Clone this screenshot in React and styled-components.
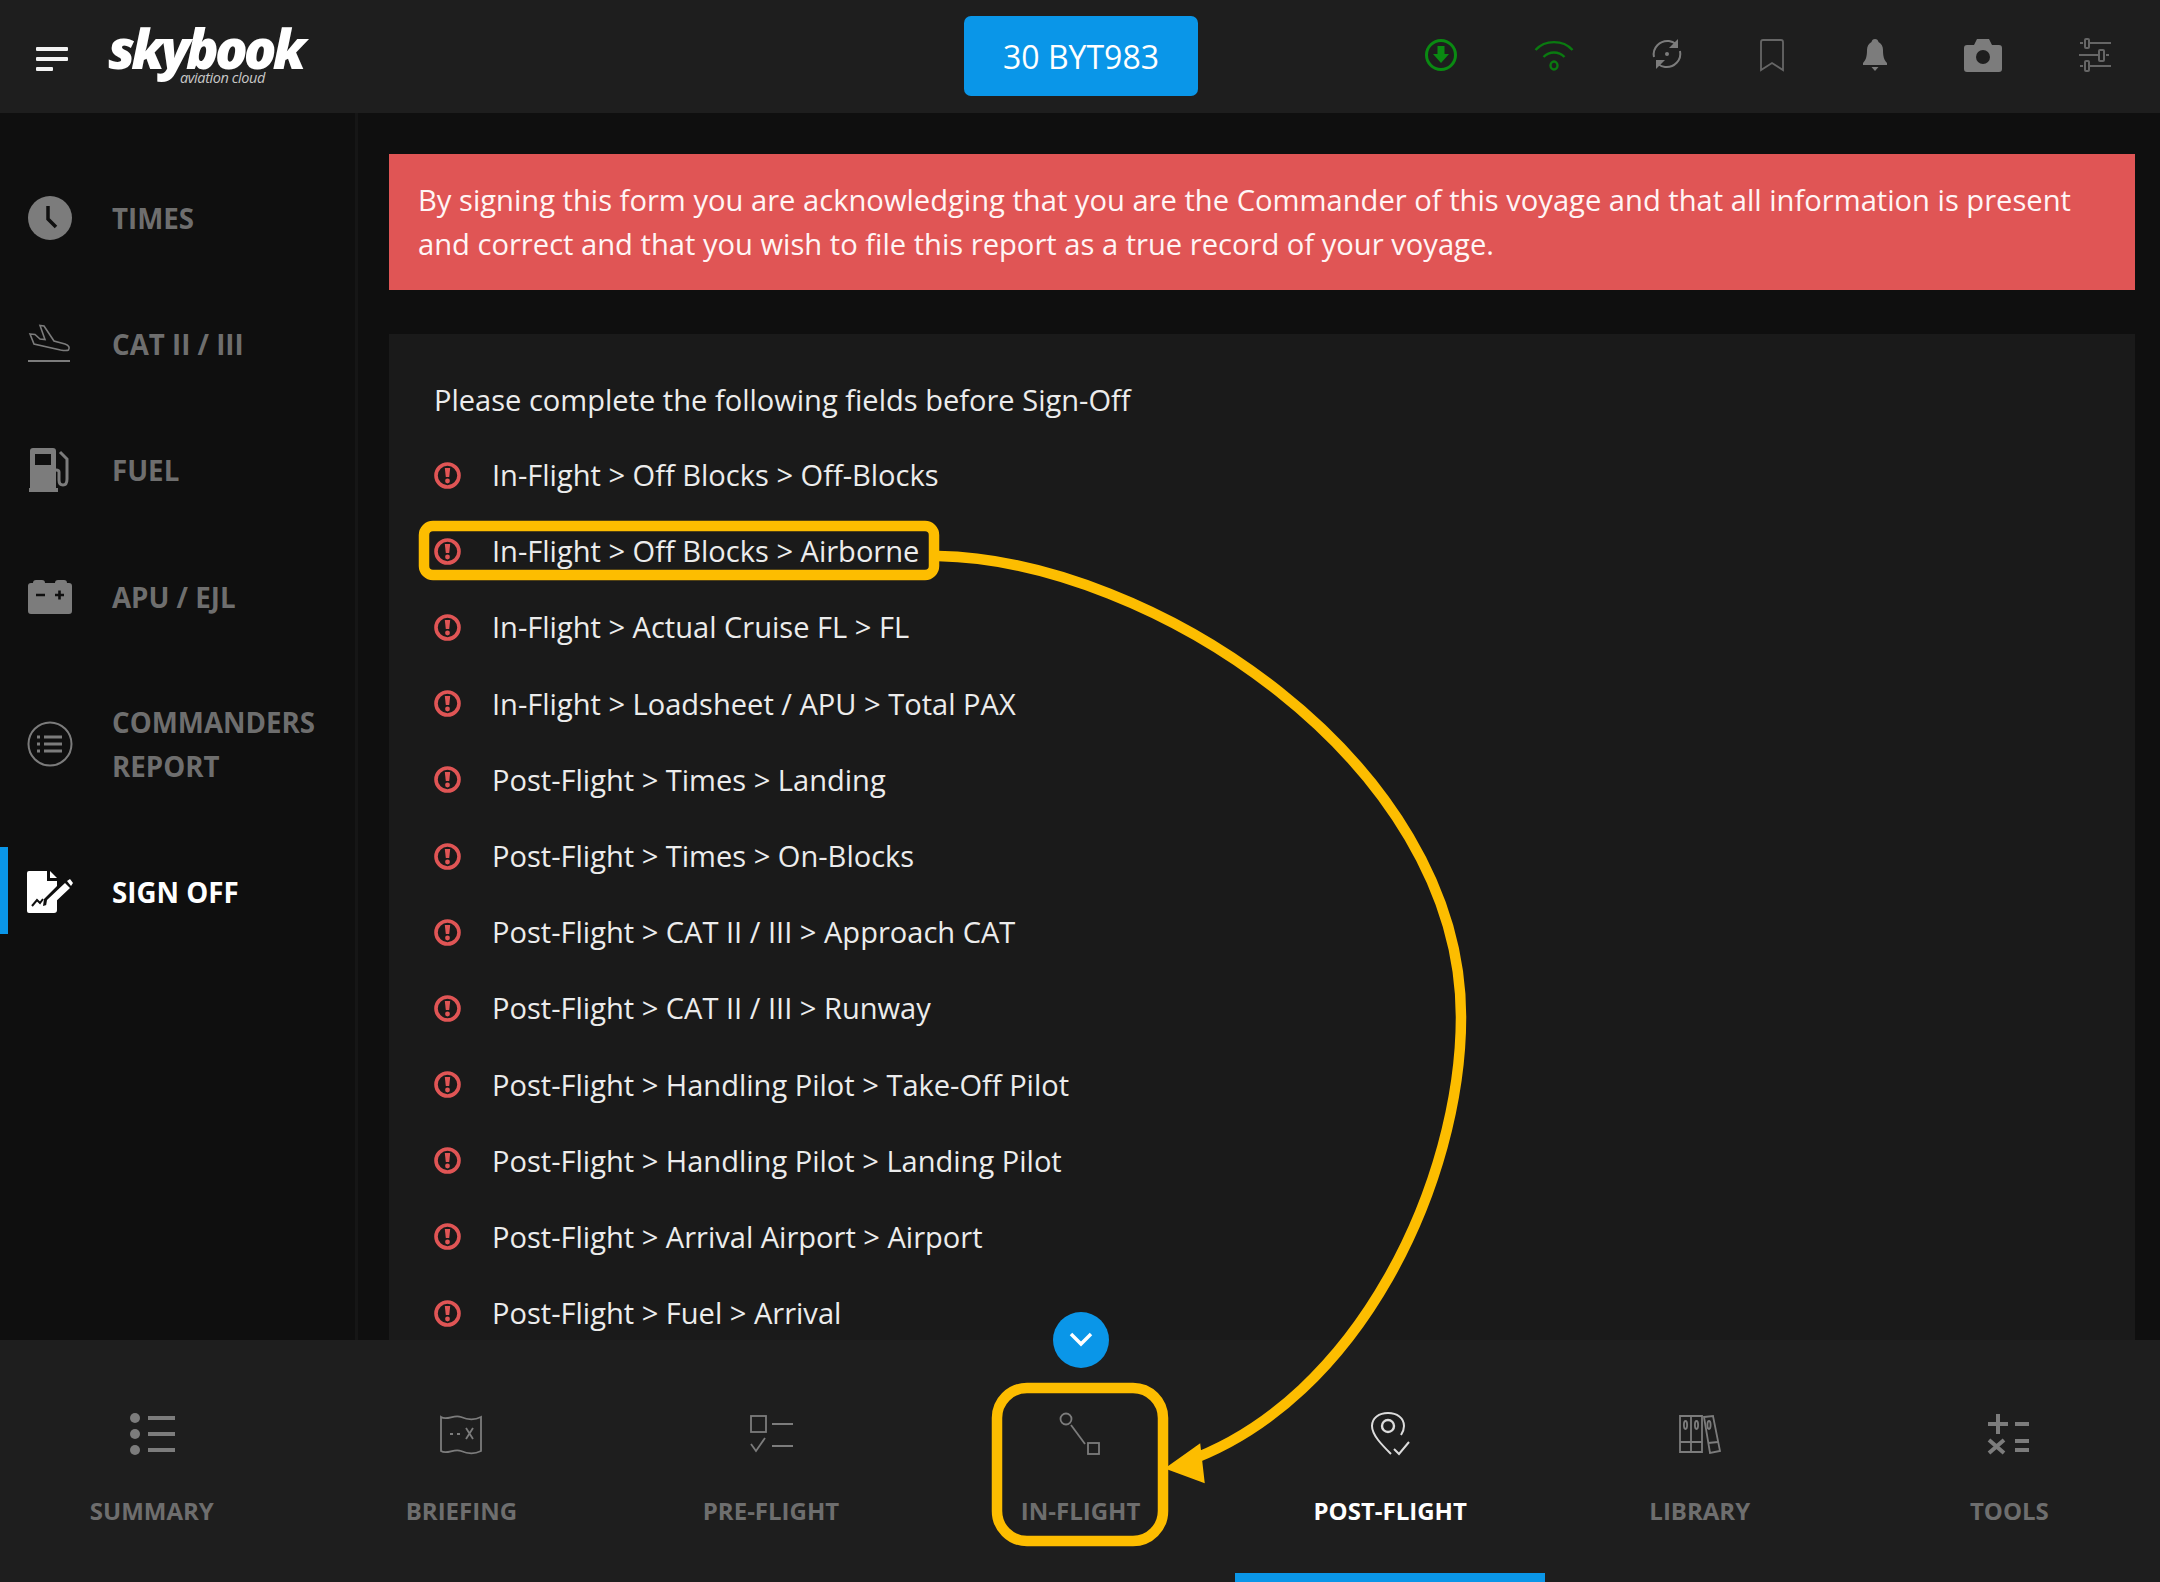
import React from "react";
import styled, { createGlobalStyle } from "styled-components";

const GlobalStyle = createGlobalStyle`
  html, body {
    margin: 0;
    padding: 0;
    background: #0f0f0f;
  }
  * {
    box-sizing: border-box;
  }
`;

const sideItems = [
  { label: ["TIMES"], icon: "clock" },
  { label: ["CAT II / III"], icon: "landing" },
  { label: ["FUEL"], icon: "fuel" },
  { label: ["APU / EJL"], icon: "battery" },
  { label: ["COMMANDERS", "REPORT"], icon: "report" },
  { label: ["SIGN OFF"], icon: "sign", active: true },
];

const fields = [
  "In-Flight > Off Blocks > Off-Blocks",
  "In-Flight > Off Blocks > Airborne",
  "In-Flight > Actual Cruise FL > FL",
  "In-Flight > Loadsheet / APU > Total PAX",
  "Post-Flight > Times > Landing",
  "Post-Flight > Times > On-Blocks",
  "Post-Flight > CAT II / III > Approach CAT",
  "Post-Flight > CAT II / III > Runway",
  "Post-Flight > Handling Pilot > Take-Off Pilot",
  "Post-Flight > Handling Pilot > Landing Pilot",
  "Post-Flight > Arrival Airport > Airport",
  "Post-Flight > Fuel > Arrival",
];

const tabs = [
  { label: "SUMMARY", icon: "summary" },
  { label: "BRIEFING", icon: "briefing" },
  { label: "PRE-FLIGHT", icon: "preflight" },
  { label: "IN-FLIGHT", icon: "inflight" },
  { label: "POST-FLIGHT", icon: "postflight", active: true },
  { label: "LIBRARY", icon: "library" },
  { label: "TOOLS", icon: "tools" },
];

const GREY = "#7c7c7c";

const icons = {
  download: (
    <svg width="34" height="34" viewBox="0 0 34 34">
      <circle cx="17" cy="17" r="14.5" fill="none" stroke="#0a8a12" strokeWidth="3" />
      <path d="M13.5 8h7v8h4.5L17 25 9 16h4.5z" fill="#0a8a12" />
    </svg>
  ),
  wifi: (
    <svg width="40" height="34" viewBox="0 0 40 34" fill="none" stroke="#0a7a10" strokeWidth="2.4">
      <path d="M1.500 12C11 1.500 29 1.500 38.500 12" />
      <path d="M9.500 19c6-6 15-6 21 0" />
      <ellipse cx="20" cy="27.500" rx="3.500" ry="4" />
    </svg>
  ),
  sync: (
    <svg width="32" height="32" viewBox="0 0 32 32" fill="none" stroke={GREY} strokeWidth="2">
      <path d="M3 19C1 10 9 2 18 3c3 .4 5 1.500 7 3" />
      <path d="M29 13c2 9-6 17-15 16-3-.4-5-1.500-7-3" />
      <path d="M27 1v9h-9z" fill={GREY} stroke="none" />
      <path d="M5 31v-9h9z" fill={GREY} stroke="none" />
      <circle cx="16" cy="16" r="2" fill={GREY} stroke="none" />
    </svg>
  ),
  bookmark: (
    <svg width="26" height="34" viewBox="0 0 26 34" fill="none" stroke="#666" strokeWidth="1.800">
      <path d="M2 32V4q0-2 2-2h18q2 0 2 2v28l-11-7z" />
    </svg>
  ),
  bell: (
    <svg width="26" height="34" viewBox="0 0 26 34" fill={GREY}>
      <path d="M13 1c2 0 3 1 3.500 3 3 1.500 4.500 4.500 4.500 8 0 6 1 10 4 13v2H1v-2c3-3 4-7 4-13 0-3.500 1.500-6.500 4.500-8C10 2 11 1 13 1z" />
      <path d="M9.500 29h7L13 33z" />
    </svg>
  ),
  camera: (
    <svg width="38" height="34" viewBox="0 0 38 34">
      <path d="M3 7h7l3-6h12l3 6h7q3 0 3 3v21q0 3-3 3H3q-3 0-3-3V10q0-3 3-3z" fill={GREY} />
      <circle cx="19" cy="19" r="7" fill="#1e1e1e" />
    </svg>
  ),
  sliders: (
    <svg width="34" height="34" viewBox="0 0 34 34" fill="none" stroke="#666" strokeWidth="2">
      <path d="M12 5h21M2 5h3M1 17h19M28 17h3M12 28h21M2 28h3" />
      <rect x="7" y="1" width="4" height="9" rx="1" />
      <rect x="21" y="12" width="5" height="11" rx="1" />
      <rect x="7" y="23" width="4" height="10" rx="1" />
    </svg>
  ),
  clock: (
    <svg width="46" height="46" viewBox="0 0 46 46">
      <circle cx="23" cy="23" r="22" fill={GREY} />
      <path d="M21 11v13l8 8" fill="none" stroke="#0f0f0f" strokeWidth="3.500" />
    </svg>
  ),
  landing: (
    <svg width="46" height="40" viewBox="0 0 46 40" fill="none" stroke={GREY} strokeWidth="1.600">
      <path d="M3 10l5 .5 5 4.500 5 .5-5-14 4 .5 10 15 11 3c4 1.200 5 4 3.500 6-2 1-5 .5-8 0L7 20z" />
      <path d="M1 37h42" strokeWidth="2" />
    </svg>
  ),
  fuel: (
    <svg width="46" height="46" viewBox="0 0 46 46">
      <path fillRule="evenodd" fill={GREY} d="M6 1h20q3 0 3 3v37h2v4H2v-4h1V4q0-3 3-3zm2 6v11h16V7z" />
      <path d="M33 5l7 7v20q0 6-4 6-4 0-4-5v-8q0-2-3-2" fill="none" stroke={GREY} strokeWidth="3" />
    </svg>
  ),
  battery: (
    <svg width="46" height="36" viewBox="0 0 46 36">
      <path fill={GREY} d="M4 4h2q0-3 3-3h6q3 0 3 3h10q0-3 3-3h6q3 0 3 3h2q3 0 3 3v25q0 3-3 3H4q-3 0-3-3V7q0-3 3-3z" />
      <path d="M9 16h9M28 16h9M32.500 11.500v9" stroke="#0f0f0f" strokeWidth="2.600" />
    </svg>
  ),
  report: (
    <svg width="46" height="46" viewBox="0 0 46 46" fill="none" stroke={GREY}>
      <circle cx="23" cy="23" r="21.500" strokeWidth="2" />
      <path d="M17 16h18M17 23h18M17 30h18" strokeWidth="3" />
      <path d="M10 16h3M10 23h3M10 30h3" strokeWidth="3" />
    </svg>
  ),
  sign: (
    <svg width="46" height="44" viewBox="0 0 46 44">
      <path fill="#fff" d="M2 1h18v10h10v5L17 29l-1 7 7-2 7-7v13q0 3-3 3H2q-2 0-2-2V3q0-2 2-2z" />
      <path fill="#fff" d="M23 1l7 7h-7z" />
      <path d="M5 36l5-6 3 3 3-4" fill="none" stroke="#0f0f0f" strokeWidth="2" />
      <path d="M20 30L38 13l5 5-18 17-6 1zM40 11l3-2 3 4-2 3z" fill="#fff" />
    </svg>
  ),
  summary: (
    <svg width="46" height="44" viewBox="0 0 46 44" fill={GREY}>
      <circle cx="6" cy="6" r="5" />
      <circle cx="6" cy="22" r="5" />
      <circle cx="6" cy="38" r="5" />
      <rect x="19" y="4" width="27" height="4" />
      <rect x="19" y="20" width="27" height="4" />
      <rect x="19" y="36" width="27" height="4" />
    </svg>
  ),
  briefing: (
    <svg width="44" height="42" viewBox="0 0 44 42" fill="none" stroke={GREY} strokeWidth="1.800">
      <path d="M2 4c6 4 13-3 20 0s14 3 20 0v34c-6 3-13 3-20 0S8 42 2 38z" />
      <path d="M11 21h3M18 21h3" strokeWidth="2.200" />
      <path d="M27 15l7 11M34 15l-7 11" />
    </svg>
  ),
  preflight: (
    <svg width="44" height="40" viewBox="0 0 44 40" fill="none" stroke={GREY} strokeWidth="1.800">
      <rect x="2" y="2" width="15" height="16" />
      <path d="M23 10h21M23 32h21" strokeWidth="2.200" />
      <path d="M2 30l5 7 9-13" />
    </svg>
  ),
  inflight: (
    <svg width="44" height="44" viewBox="0 0 44 44" fill="none" stroke={GREY} strokeWidth="1.800">
      <circle cx="7" cy="7" r="5.500" />
      <path d="M12 13l14 19" />
      <rect x="29" y="31" width="11" height="11" />
    </svg>
  ),
  postflight: (
    <svg width="42" height="46" viewBox="0 0 42 46" fill="none" stroke="#dcdcdc" strokeWidth="2">
      <path d="M22 43C13 34 3 24 3 15 3 7 10 2 19 2s16 5 16 13c0 3-1 6-3 9" />
      <circle cx="19" cy="15" r="6" strokeWidth="2.400" />
      <path d="M25 38l5 5 10-12" />
    </svg>
  ),
  library: (
    <svg width="42" height="40" viewBox="0 0 42 40" fill="none" stroke={GREY} strokeWidth="1.800">
      <path d="M1 2h11v36H1zM12 2h11v36H12zM25 3l9-1 7 35-10 2z" />
      <path d="M1 28h22M29 29l10-1" />
      <ellipse cx="6.500" cy="11" rx="1.600" ry="4" />
      <ellipse cx="17.500" cy="11" rx="1.600" ry="4" />
      <ellipse cx="30" cy="11" rx="1.600" ry="4" />
    </svg>
  ),
  tools: (
    <svg width="44" height="42" viewBox="0 0 44 42" fill="none" stroke={GREY} strokeWidth="4">
      <path d="M11 1v20M1 11h20M28 11h14" />
      <path d="M2 27l15 13M17 27L2 40" />
      <path d="M28 28h14M28 37h14" />
    </svg>
  ),
};

export default function App() {
  return (
    <Page>
      <GlobalStyle />
      <Header>
        <Brand>
          <Burger>
            <BurgerBar />
            <BurgerBar />
            <BurgerBar $short />
          </Burger>
          <Logo>
            <LogoName>skybook</LogoName>
            <LogoTag>aviation cloud</LogoTag>
          </Logo>
        </Brand>
        <FlightButton>30 BYT983</FlightButton>
        <HeaderIcons>
          <HeaderIcon $w={34}>{icons.download}</HeaderIcon>
          <HeaderIcon $w={40}>{icons.wifi}</HeaderIcon>
          <HeaderIcon $w={32}>{icons.sync}</HeaderIcon>
          <HeaderIcon $w={26}>{icons.bookmark}</HeaderIcon>
          <HeaderIcon $w={26}>{icons.bell}</HeaderIcon>
          <HeaderIcon $w={38}>{icons.camera}</HeaderIcon>
          <HeaderIcon $w={34}>{icons.sliders}</HeaderIcon>
        </HeaderIcons>
      </Header>

      <Body>
        <Sidebar>
          {sideItems.map((item) => (
            <SideItem key={item.icon} $active={item.active}>
              <SideIcon>{icons[item.icon]}</SideIcon>
              <SideLabel>
                {item.label.map((line) => (
                  <div key={line}>{line}</div>
                ))}
              </SideLabel>
            </SideItem>
          ))}
        </Sidebar>
        <Main>
          <Banner>
            By signing this form you are acknowledging that you are the Commander of this voyage
            and that all information is present and correct and that you wish to file this report
            as a true record of your voyage.
          </Banner>
          <Panel>
            <PanelTitle>Please complete the following fields before Sign-Off</PanelTitle>
            {fields.map((field) => (
              <FieldRow key={field}>
                <WarnIcon>
                  <svg width="27" height="27" viewBox="0 0 27 27">
                    <circle cx="13.500" cy="13.500" r="11.500" fill="none" stroke="#e05555" strokeWidth="3.600" />
                    <path d="M10.800 6h5.400l-1 9h-3.400z" fill="#e05555" />
                    <circle cx="13.500" cy="19" r="2.400" fill="#e05555" />
                  </svg>
                </WarnIcon>
                {field}
              </FieldRow>
            ))}
          </Panel>
        </Main>
      </Body>

      <BottomNav>
        {tabs.map((tab) => (
          <Tab key={tab.label} $active={tab.active}>
            <TabIcon>{icons[tab.icon]}</TabIcon>
            <TabLabel $active={tab.active}>{tab.label}</TabLabel>
          </Tab>
        ))}
      </BottomNav>

      <ScrollButton>
        <svg width="28" height="18" viewBox="0 0 28 18" fill="none" stroke="#fff" strokeWidth="3.500">
          <path d="M4 3l10 10L24 3" />
        </svg>
      </ScrollButton>

      {/* callouts drawn on top of the screen */}
      <Annotations viewBox="0 0 2160 1582" fill="none" stroke="#fdbd00" strokeWidth="10.500">
        <rect x="424" y="526" width="510" height="49" rx="9" />
        <rect x="997" y="1388" width="166" height="153" rx="30" />
        <path d="M938 556C1150 560 1461 760 1461 1017C1461 1180 1360 1400 1185 1462" />
        <path d="M1168 1468L1199 1446L1203 1481z" fill="#fdbd00" stroke="#fdbd00" strokeWidth="3" />
      </Annotations>
    </Page>
  );
}

const Page = styled.div`
  position: relative;
  width: 2160px;
  height: 1582px;
  overflow: hidden;
  display: flex;
  flex-direction: column;
  background: #0f0f0f;
  font-family: "Open Sans", "Liberation Sans", sans-serif;
`;

const Header = styled.header`
  height: 113px;
  flex: none;
  display: grid;
  grid-template-columns: 964px 234px 1fr;
  align-items: center;
  background: #1e1e1e;
`;

const Brand = styled.div`
  display: flex;
  align-items: center;
  padding-left: 36px;
`;

const Burger = styled.div`
  width: 32px;
  display: flex;
  flex-direction: column;
  gap: 6px;
  margin-top: 4px;
`;

const BurgerBar = styled.span`
  display: block;
  height: 4px;
  border-radius: 1px;
  width: ${(p) => (p.$short ? "17px" : "32px")};
  background: #f2f2f2;
`;

const Logo = styled.div`
  position: relative;
  margin-left: 40px;
  height: 60px;
  width: 200px;
`;

const LogoName = styled.div`
  font-size: 54px;
  line-height: 42px;
  height: 42px;
  font-weight: 800;
  font-style: italic;
  letter-spacing: -3.900px;
  color: #fff;
`;

const LogoTag = styled.div`
  position: absolute;
  left: 72px;
  top: 43px;
  font-size: 14.500px;
  line-height: 16px;
  font-style: italic;
  letter-spacing: -0.4px;
  color: #c8c8c8;
  white-space: nowrap;
`;

const FlightButton = styled.button`
  height: 80px;
  width: 234px;
  margin-top: -1px;
  border: none;
  border-radius: 7px;
  background: #0a96e8;
  color: #fff;
  font-family: inherit;
  font-size: 32px;
`;

const HeaderIcons = styled.div`
  display: grid;
  grid-template-columns: 100px 126px 100px 110px 95px 122px 102px;
  justify-items: center;
  margin-left: 193px;
  margin-bottom: 4px;
`;

const HeaderIcon = styled.div`
  width: ${(p) => p.$w}px;
  height: 34px;
  line-height: 0;
`;

const Body = styled.div`
  flex: 1;
  min-height: 0;
  display: flex;
`;

const Sidebar = styled.aside`
  width: 358px;
  flex: none;
  padding-top: 41.500px;
  border-right: 3px solid #161616;
`;

const SideItem = styled.div`
  position: relative;
  display: flex;
  align-items: center;
  gap: 39px;
  padding: 40.200px 0 40.200px 27px;
  color: ${(p) => (p.$active ? "#fff" : "#6e6e6e")};

  ${(p) =>
    p.$active &&
    `&::before {
      content: "";
      position: absolute;
      left: 0;
      top: 19px;
      width: 8px;
      height: 87px;
      background: #0a96e8;
    }`}
`;

const SideIcon = styled.div`
  width: 46px;
  height: 46px;
  flex: none;
  display: flex;
  align-items: center;
  justify-content: center;
`;

const SideLabel = styled.div`
  font-size: 27.700px;
  line-height: 44px;
  font-weight: 700;
`;

const Main = styled.main`
  flex: 1;
  min-width: 0;
  padding: 41px 25px 0 31px;
  display: flex;
  flex-direction: column;
  gap: 44px;
`;

const Banner = styled.div`
  flex: none;
  height: 136px;
  padding: 24px 29px;
  background: #e05555;
  color: #fff5f5;
  font-size: 29.150px;
  font-weight: 500;
  line-height: 44px;
`;

const Panel = styled.section`
  flex: 1;
  min-height: 0;
  overflow: hidden;
  padding: 44px 45px 0;
  background: #1a1a1a;
  color: #ececec;
  font-size: 29.050px;
  font-weight: 500;
`;

const PanelTitle = styled.div`
  line-height: 44px;
  margin-bottom: 15px;
`;

const FieldRow = styled.div`
  height: 76.200px;
  display: flex;
  align-items: center;
  gap: 31px;
  white-space: pre;
`;

const WarnIcon = styled.span`
  width: 27px;
  height: 27px;
  flex: none;
  line-height: 0;
`;

const BottomNav = styled.nav`
  height: 242px;
  flex: none;
  display: grid;
  grid-template-columns: repeat(7, 309.600px);
  margin-left: -3px;
  background: #1e1e1e;
`;

const Tab = styled.div`
  position: relative;
  display: flex;
  flex-direction: column;
  align-items: center;
  padding-top: 72px;

  ${(p) =>
    p.$active &&
    `&::after {
      content: "";
      position: absolute;
      left: 0;
      right: 0;
      bottom: 0;
      height: 9px;
      background: #0a96e8;
    }`}
`;

const TabIcon = styled.div`
  height: 44px;
  display: flex;
  align-items: center;
  justify-content: center;
`;

const TabLabel = styled.div`
  margin-top: 38px;
  font-size: 24px;
  line-height: 34px;
  font-weight: 700;
  color: ${(p) => (p.$active ? "#fff" : "#6e6e6e")};
`;

const ScrollButton = styled.div`
  position: absolute;
  left: 1053px;
  top: 1312px;
  width: 56px;
  height: 56px;
  border-radius: 50%;
  background: #0a96e8;
  display: flex;
  align-items: center;
  justify-content: center;
`;

const Annotations = styled.svg`
  position: absolute;
  left: 0;
  top: 0;
  width: 2160px;
  height: 1582px;
  pointer-events: none;
`;
